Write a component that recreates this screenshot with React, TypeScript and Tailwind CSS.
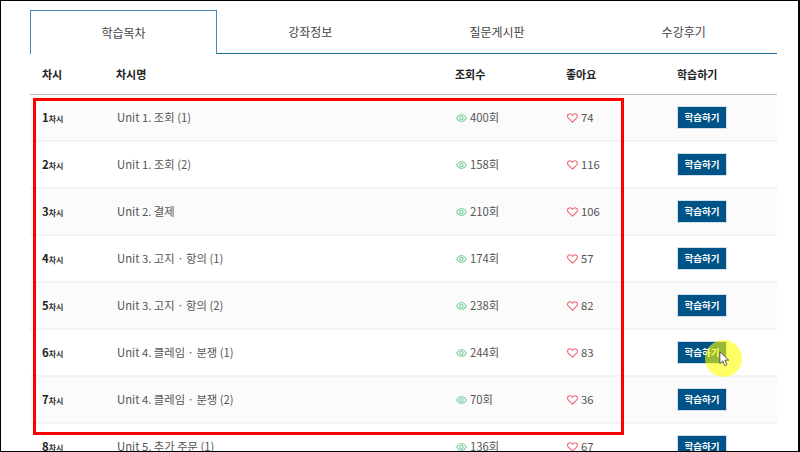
const rows = [
  ["1", "Unit 1. 조회 (1)", "400회", "74"],
  ["2", "Unit 1. 조회 (2)", "158회", "116"],
  ["3", "Unit 2. 결제", "210회", "106"],
  ["4", "Unit 3. 고지 · 항의 (1)", "174회", "57"],
  ["5", "Unit 3. 고지 · 항의 (2)", "238회", "82"],
  ["6", "Unit 4. 클레임 · 분쟁 (1)", "244회", "83"],
  ["7", "Unit 4. 클레임 · 분쟁 (2)", "70회", "36"],
  ["8", "Unit 5. 추가 주문 (1)", "136회", "67"],
];

const Eye = () => (
  <svg width="11" height="10" viewBox="0 0 11 10" fill="none" stroke="#86d3a8" strokeWidth="1.2" className="shrink-0">
    <path d="M0.7 5C2 2.6 3.6 1.5 5.5 1.5S9 2.6 10.3 5C9 7.4 7.4 8.5 5.5 8.5S2 7.4 0.7 5Z" />
    <circle cx="5.5" cy="5" r="1.7" />
  </svg>
);

const Heart = () => (
  <svg width="11" height="10" viewBox="0 0 11 10" fill="none" stroke="#ee6a7c" strokeWidth="1.1" className="shrink-0">
    <path d="M5.5 9.2 1.4 5.1C.3 4 .4 2.4 1.3 1.5 2.3.6 3.8.6 4.8 1.6L5.5 2.3 6.2 1.6C7.2.6 8.7.6 9.7 1.5 10.6 2.4 10.7 4 9.6 5.1Z" />
  </svg>
);

export default function App() {
  return (
    <div
      className="relative h-[452px] w-[800px] overflow-hidden border-t border-r-2 border-l border-b border-black bg-white pt-[9px] pl-[29px] text-[#555]"
      style={{ fontFamily: '"Noto Sans CJK KR", "Noto Sans", sans-serif' }}
    >
      <div className="w-[747px]">
        <div className="flex h-[44px] text-[12px] text-[#444]">
          <div className="flex w-[187px] items-center justify-center border-x border-t border-[#4b86b4] bg-white">학습목차</div>
          {["강좌정보", "질문게시판", "수강후기"].map((t) => (
            <div key={t} className="flex flex-1 items-center justify-center border-b border-[#1f6a9c]">{t}</div>
          ))}
        </div>
        <div className="grid h-[41px] grid-cols-[86px_339px_111px_111px_100px] items-center border-b border-[#bbb] text-[11px] font-bold text-[#222]">
          <div className="pl-3">차시</div>
          <div>차시명</div>
          <div>조회수</div>
          <div>좋아요</div>
          <div>학습하기</div>
        </div>
        {rows.map((r, i) => (
          <div
            key={r[0]}
            className={`grid h-[47px] grid-cols-[86px_339px_111px_111px_100px] items-center border-b-2 border-[#f3f3f3] text-[11.3px] ${i % 2 === 0 ? "bg-[#fbfbfb]" : "bg-white"}`}
          >
            <div className="pl-3 font-bold text-[#222]">
              {r[0]}<span className="text-[8px] text-[#333]">차시</span>
            </div>
            <div className="pl-[1px] text-[#555]">{r[1]}</div>
            <div className="flex items-center gap-[3px] pl-[1px]">
              <Eye />
              <span>{r[2]}</span>
            </div>
            <div className="flex items-center gap-[3px] pl-[1px]">
              <Heart />
              <span>{r[3]}</span>
            </div>
            <div>
              <div className="flex h-[23px] w-[50px] items-center justify-center border border-[#cfe0ec] bg-[#005386] text-[9.5px] font-bold text-white">
                학습하기
              </div>
            </div>
          </div>
        ))}
      </div>

      <div className="absolute top-[97px] left-[32px] h-[337px] w-[591px] border-[3px] border-[#f00]" />
      <div className="absolute top-[339px] left-[704px] h-[37px] w-[37px] rounded-full bg-[#ffff00]/60" />
      <svg className="absolute top-[350px] left-[718px]" width="11" height="16" viewBox="0 0 13 19">
        <path d="M1 1V15L4.4 11.8 6.8 17.4 9.4 16.2 7 10.8H11.5Z" fill="#fff" stroke="#444" strokeWidth="1" />
      </svg>
    </div>
  );
}
